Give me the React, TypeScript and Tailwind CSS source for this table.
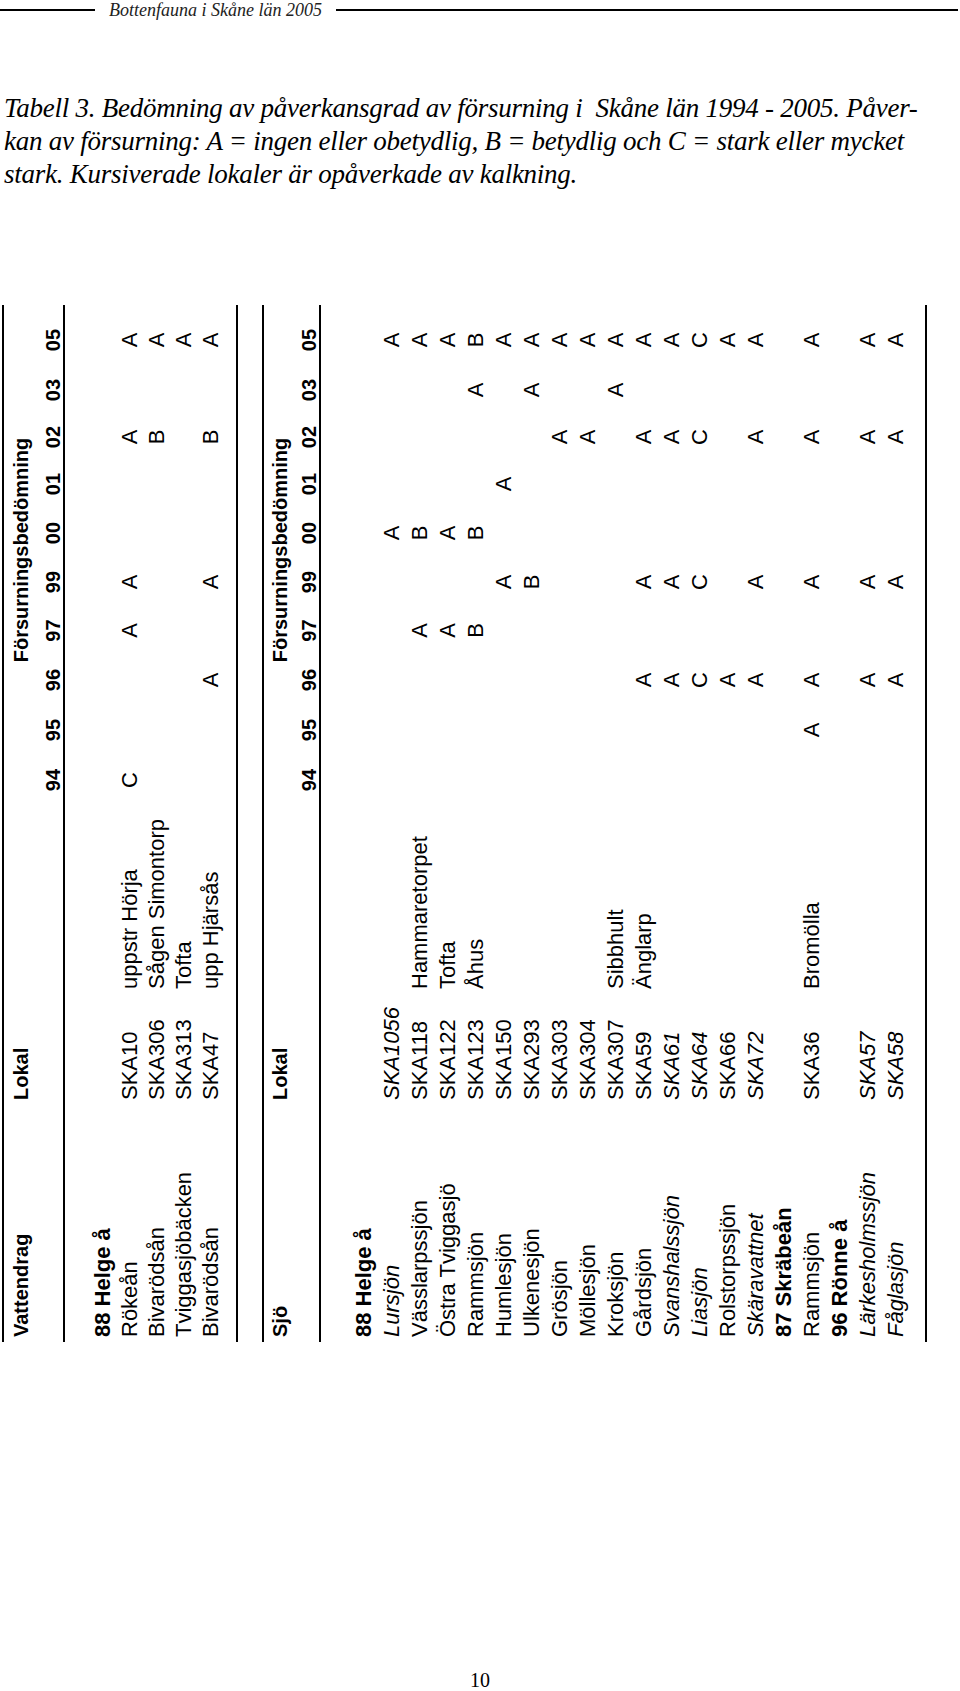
const YEARS = ["94", "95", "96", "97", "99", "00", "01", "02", "03", "05"];
// column widths along the table's own x axis, so the marks sit under their year
const YEAR_W = ["w-[50px]", "w-[50px]", "w-[50px]", "w-[49px]", "w-[48px]", "w-[50px]", "w-[48px]", "w-[46px]", "w-[48px]", "w-[52px]"];

type Row = {
  name: string;
  code?: string;
  place?: string;
  it?: boolean;
  head?: boolean;
  v?: Record<string, string>;
};

const streams: Row[] = [
  { name: "88 Helge å", head: true },
  { name: "Rökeån", code: "SKA10", place: "uppstr Hörja", v: { "94": "C", "97": "A", "99": "A", "02": "A", "05": "A" } },
  { name: "Bivarödsån", code: "SKA306", place: "Sågen Simontorp", v: { "02": "B", "05": "A" } },
  { name: "Tviggasjöbäcken", code: "SKA313", place: "Tofta", v: { "05": "A" } },
  { name: "Bivarödsån", code: "SKA47", place: "upp Hjärsås", v: { "96": "A", "99": "A", "02": "B", "05": "A" } },
];

const lakes: Row[] = [
  { name: "88 Helge å", head: true },
  { name: "Lursjön", code: "SKA1056", it: true, v: { "00": "A", "05": "A" } },
  { name: "Vässlarpssjön", code: "SKA118", place: "Hammaretorpet", v: { "97": "A", "00": "B", "05": "A" } },
  { name: "Östra Tviggasjö", code: "SKA122", place: "Tofta", v: { "97": "A", "00": "A", "05": "A" } },
  { name: "Rammsjön", code: "SKA123", place: "Åhus", v: { "97": "B", "00": "B", "03": "A", "05": "B" } },
  { name: "Humlesjön", code: "SKA150", v: { "99": "A", "01": "A", "05": "A" } },
  { name: "Ulkenesjön", code: "SKA293", v: { "99": "B", "03": "A", "05": "A" } },
  { name: "Grösjön", code: "SKA303", v: { "02": "A", "05": "A" } },
  { name: "Möllesjön", code: "SKA304", v: { "02": "A", "05": "A" } },
  { name: "Kroksjön", code: "SKA307", place: "Sibbhult", v: { "03": "A", "05": "A" } },
  { name: "Gårdsjön", code: "SKA59", place: "Änglarp", v: { "96": "A", "99": "A", "02": "A", "05": "A" } },
  { name: "Svanshalssjön", code: "SKA61", it: true, v: { "96": "A", "99": "A", "02": "A", "05": "A" } },
  { name: "Liasjön", code: "SKA64", it: true, v: { "96": "C", "99": "C", "02": "C", "05": "C" } },
  { name: "Rolstorpssjön", code: "SKA66", v: { "96": "A", "05": "A" } },
  { name: "Skäravattnet", code: "SKA72", it: true, v: { "96": "A", "99": "A", "02": "A", "05": "A" } },
  { name: "87 Skräbeån", head: true },
  { name: "Rammsjön", code: "SKA36", place: "Bromölla", v: { "95": "A", "96": "A", "99": "A", "02": "A", "05": "A" } },
  { name: "96 Rönne å", head: true },
  { name: "Lärkesholmssjön", code: "SKA57", it: true, v: { "96": "A", "99": "A", "02": "A", "05": "A" } },
  { name: "Fåglasjön", code: "SKA58", it: true, v: { "96": "A", "99": "A", "02": "A", "05": "A" } },
];

function DataRow({ row, h }: { row: Row; h: string }) {
  if (row.head) {
    return <div className={`${h} pl-[5px] font-bold whitespace-nowrap`}>{row.name}</div>;
  }
  return (
    <div className={`flex ${h} whitespace-nowrap`}>
      <div className={`w-[242px] shrink-0 pl-[5px] ${row.it ? "italic" : ""}`}>{row.name}</div>
      <div className={`w-[111px] shrink-0 ${row.it ? "italic" : ""}`}>{row.code}</div>
      <div className="w-[184px] shrink-0">{row.place}</div>
      {YEARS.map((y, i) => (
        <div key={y} className={`${YEAR_W[i]} shrink-0 text-center`}>
          {row.v?.[y] ?? ""}
        </div>
      ))}
    </div>
  );
}

function TableHead({ first, lineGap }: { first: string; lineGap: string }) {
  return (
    <div className="font-bold text-[20px]">
      <div className="flex h-[28px] leading-[28px] whitespace-nowrap">
        <div className="w-[242px] shrink-0 pl-[5px]">{first}</div>
        <div className="w-[111px] shrink-0">Lokal</div>
        <div className="w-[194px] shrink-0" />
        <div className="w-[490px] shrink-0 text-center">Försurningsbedömning</div>
      </div>
      <div className={`flex h-[20px] leading-[20px] ${lineGap}`}>
        <div className="w-[537px] shrink-0" />
        {YEARS.map((y, i) => (
          <div key={y} className={`${YEAR_W[i]} shrink-0 text-center`}>
            {y}
          </div>
        ))}
      </div>
    </div>
  );
}

export default function App() {
  return (
    <div className="w-[960px] h-[1691px] bg-white text-black overflow-hidden">
      <div className="flex items-center h-[20px]">
        <div className="w-[95px] h-[2px] bg-black" />
        <div className="px-[14px] font-['Liberation_Serif',serif] italic text-[18px] leading-[20px] text-[#222]">
          Bottenfauna i Skåne län 2005
        </div>
        <div className="flex-1 h-[2px] bg-black mr-[2px]" />
      </div>

      <p className="mt-[72px] pl-[4px] font-['Liberation_Serif',serif] italic text-[27px] leading-[33px] tracking-[-0.25px] whitespace-nowrap">
        Tabell 3. Bedömning av påverkansgrad av försurning i&nbsp; Skåne län 1994 - 2005. Påver-
        <br />
        kan av försurning: A = ingen eller obetydlig, B = betydlig och C = stark eller mycket
        <br />
        stark. Kursiverade lokaler är opåverkade av kalkning.
      </p>

      <div className="ml-[2px] mt-[114px] w-[925px] h-[1037px] overflow-hidden">
        <div className="w-[1037px] h-[925px] origin-top-left -rotate-90 translate-y-[1037px] font-['Liberation_Sans',Arial,sans-serif] text-[22px]">
          <div className="h-[2px] bg-black" />
          <div className="pt-[3px]">
            <TableHead first="Vattendrag" lineGap="mt-[8px]" />
          </div>
          <div className="h-[2px] bg-black" />
          <div className="pt-[24px]">
            {streams.map((r, i) => (
              <DataRow key={i} row={r} h="h-[27px] leading-[27px]" />
            ))}
          </div>
          <div className="mt-[12px] h-[2px] bg-black" />

          <div className="mt-[24px] h-[2px] bg-black" />
          <div className="pt-[2px]">
            <TableHead first="Sjö" lineGap="mt-[5px]" />
          </div>
          <div className="h-[2px] bg-black" />
          <div className="pt-[29px]">
            {lakes.map((r, i) => (
              <DataRow key={i} row={r} h="h-[28px] leading-[28px]" />
            ))}
          </div>
          <div className="mt-[15px] h-[2px] bg-black" />
        </div>
      </div>

      <div className="mt-[326px] text-center font-['Liberation_Serif',serif] text-[20px] leading-[24px]">
        10
      </div>
    </div>
  );
}
